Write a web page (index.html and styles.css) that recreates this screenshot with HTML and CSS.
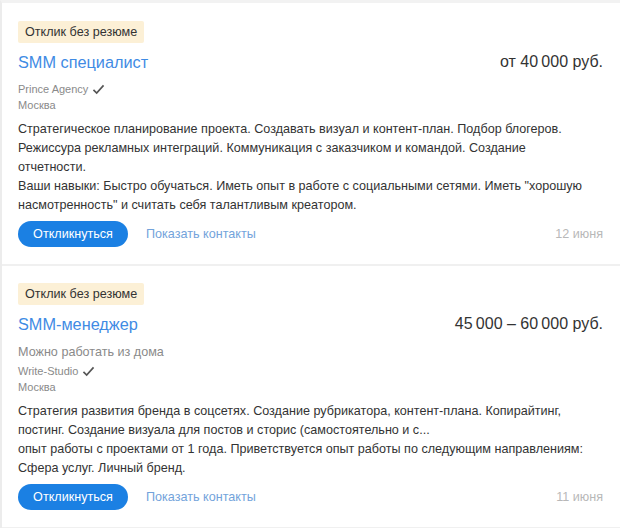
FILE: index.html
```html
<!DOCTYPE html>
<html lang="ru">
<head>
<meta charset="utf-8">
<title>Вакансии</title>
<link rel="stylesheet" href="styles.css">
</head>
<body>
<div class="list">
  <div class="card">
    <span class="badge">Отклик без резюме</span>
    <div class="head">
      <a class="title" href="#">SMM специалист</a>
      <span class="salary">от 40&#8239;000 руб.</span>
    </div>
    <div class="company">Prince Agency <svg class="check" viewBox="0 0 14 12" width="13" height="11"><path d="M1.5 6.5 L5 10 L12.5 1.5" fill="none" stroke="#555" stroke-width="1.8"/></svg></div>
    <div class="city">Москва</div>
    <div class="desc">Стратегическое планирование проекта. Создавать визуал и контент-план. Подбор блогеров. Режиссура рекламных интеграций. Коммуникация с заказчиком и командой. Создание отчетности.<br>Ваши навыки: Быстро обучаться. Иметь опыт в работе с социальными сетями. Иметь "хорошую насмотренность" и считать себя талантливым креатором.</div>
    <div class="actions">
      <button class="btn">Откликнуться</button>
      <a class="contacts" href="#">Показать контакты</a>
      <span class="date">12 июня</span>
    </div>
  </div>
  <div class="card">
    <span class="badge">Отклик без резюме</span>
    <div class="head">
      <a class="title" href="#">SMM-менеджер</a>
      <span class="salary">45&#8239;000 – 60&#8239;000 руб.</span>
    </div>
    <div class="remote">Можно работать из дома</div>
    <div class="company">Write-Studio <svg class="check" viewBox="0 0 14 12" width="13" height="11"><path d="M1.5 6.5 L5 10 L12.5 1.5" fill="none" stroke="#555" stroke-width="1.8"/></svg></div>
    <div class="city">Москва</div>
    <div class="desc">Стратегия развития бренда в соцсетях. Создание рубрикатора, контент-плана. Копирайтинг, постинг. Создание визуала для постов и сторис (самостоятельно и с...<br>опыт работы с проектами от 1 года. Приветствуется опыт работы по следующим направлениям: Сфера услуг. Личный бренд.</div>
    <div class="actions">
      <button class="btn">Откликнуться</button>
      <a class="contacts" href="#">Показать контакты</a>
      <span class="date">11 июня</span>
    </div>
  </div>
</div>
</body>
</html>
```
FILE: styles.css
```css
html, body {
  margin: 0;
  padding: 0;
  background: #fff;
}
body {
  font-family: "Liberation Sans", Arial, sans-serif;
  color: #333;
}
.list {
  border-top: 3px solid #f2f2f2;
  border-left: 2px solid #ececec;
}
.card {
  padding: 18px 17px 17px 16px;
  border-bottom: 2px solid #f0f0f0;
}
.card + .card {
  padding-top: 17px;
}
.badge {
  display: inline-block;
  background: #fcf0d6;
  color: #333;
  font-size: 12.6px;
  line-height: 22px;
  padding: 0 7px;
  border-radius: 2px;
}
.head {
  display: flex;
  justify-content: space-between;
  align-items: center;
  margin-top: 7px;
  line-height: 24px;
}
.title {
  color: #3f8be4;
  font-size: 16.3px;
  text-decoration: none;
}
.salary {
  font-size: 16px;
  color: #333;
}
.remote {
  margin-top: 8px;
  font-size: 12.6px;
  line-height: 16px;
  color: #8a8a8a;
}
.company {
  margin-top: 7px;
  font-size: 11px;
  line-height: 16px;
  color: #8a8a8a;
  display: flex;
  align-items: center;
  gap: 4px;
}
.remote + .company {
  margin-top: 3px;
}
.check {
  display: block;
}
.city {
  font-size: 11px;
  line-height: 16px;
  color: #8a8a8a;
}
.desc {
  margin-top: 7px;
  margin-right: 14px;
  font-size: 12.6px;
  line-height: 19px;
  color: #333;
}
.actions {
  display: flex;
  align-items: center;
  margin-top: 6px;
}
.btn {
  font-family: inherit;
  font-size: 12.6px;
  color: #fff;
  background: #1b80e3;
  border: none;
  border-radius: 14px;
  height: 26px;
  width: 110px;
  padding: 0;
  cursor: pointer;
}
.contacts {
  margin-left: 18px;
  font-size: 12.6px;
  color: #73a3db;
  text-decoration: none;
}
.date {
  margin-left: auto;
  font-size: 12.6px;
  color: #b8b8b8;
}
```
